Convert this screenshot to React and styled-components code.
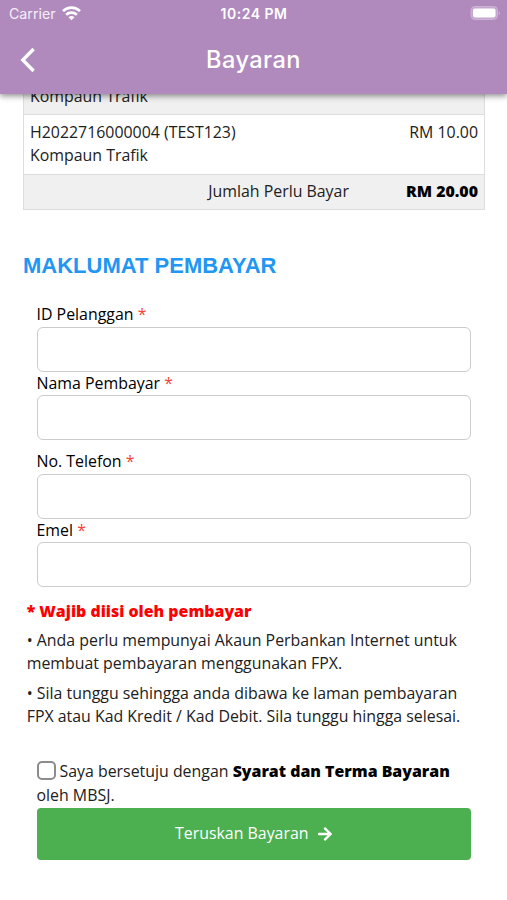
import React from 'react';
import styled, { createGlobalStyle, css } from 'styled-components';
import { FaArrowRight } from 'react-icons/fa';


const GlobalStyle = createGlobalStyle`
  * {
    box-sizing: border-box;
  }

  body {
    margin: 0;
    background-color: #FFFFFF;
    color: #212121;
    font-family: "Open Sans", "Noto Sans", sans-serif;
    font-size: 15.9px;
    line-height: 23.4px;
  }
`

const Screen = styled.div`
  height: 900px;
  display: flex;
  flex-direction: column;
  overflow: hidden;
`

const Header = styled.header`
  position: relative;
  z-index: 1;
  flex: none;
  height: 94px;
  background-color: #B08ABD;
  color: #FFFFFF;
  font-family: Inter, sans-serif;
  box-shadow: 0 2px 6px rgba(0, 0, 0, .45);
`

const StatusBar = styled.div`
  display: grid;
  grid-template-columns: 1fr auto 1fr;
  align-items: center;
  height: 27px;
  padding: 0 6px 0 9px;
  font-size: 14.2px;
  line-height: 27px;
`

const Carrier = styled.div`
  display: flex;
  align-items: center;
  gap: 6px;
  color: #F5EFF7;
`

const Clock = styled.div`
  margin-left: -2px;
  font-weight: 600;
  font-size: 14px;
  letter-spacing: .5px;
`

const Battery = styled.svg`
  justify-self: end;
`

const TitleBar = styled.div`
  display: grid;
  grid-template-columns: 1fr auto 1fr;
  align-items: center;
  height: 66px;
  padding: 0 20px;
`

const Title = styled.h1`
  margin: 0;
  font-size: 23.6px;
  font-weight: 500;
  line-height: 28px;
  letter-spacing: .4px;
`

const Content = styled.main`
  flex: 1;
  min-height: 0;
  overflow: hidden;
  padding: 0 22px 0 23px;
`

/* the list is scrolled, so its first item sits half under the header */
const Items = styled.div`
  margin-top: -41px;
  border: 1px solid #DDDDDD;
`

const Item = styled.div`
  display: flex;
  justify-content: space-between;
  height: 60px;
  padding: 6px 6px 6px;
  border-bottom: 1px solid #DDDDDD;

  ${({ shaded }) => shaded && css`
    align-items: flex-end;
    height: 61px;
    background-color: #F0F0F0;
  `}
`

const Total = styled.div`
  display: flex;
  justify-content: flex-end;
  align-items: center;
  gap: 57px;
  height: 34px;
  padding-right: 6px;
  background-color: #F0F0F0;
`

const Strong = styled.strong`
  font-weight: 800;
  color: #000000;
`

const SectionTitle = styled.h2`
  margin: 43px 0 24.3px;
  font-family: "Liberation Sans", Arial, sans-serif;
  font-size: 22px;
  font-weight: 700;
  line-height: 26px;
  color: #2196F3;
`

const Form = styled.form`
  padding: 0 14px 0 13.5px;
`

const Group = styled.div`
  margin-bottom: 10px;
`

const Field = styled.label`
  display: block;
  color: #000000;
`

const Required = styled.span`
  color: #F44336;
`

const Input = styled.input`
  display: block;
  width: 100%;
  height: 45px;
  padding: 0 10px;
  border: 1px solid #CCCCCC;
  border-radius: 6px;
  outline: none;
  background-color: #FFFFFF;
  font: inherit;
`

const Notes = styled.div`
  padding: 2.7px 14px 0 3.7px;
`

const Note = styled.p`
  margin: 0 0 6px;

  ${({ warning }) => warning && css`
    color: #FF0000;
    font-weight: 800;
  `}
`

const Agreement = styled.div`
  padding: 25.7px 14px 0 13.5px;
  line-height: 23.9px;
`

const Checkbox = styled.input`
  appearance: none;
  width: 19px;
  height: 19px;
  margin: 0 4px 0 0;
  border: 2px solid #8C8C8C;
  border-radius: 5px;
  vertical-align: -3px;
`

const Submit = styled.button`
  display: flex;
  align-items: center;
  justify-content: center;
  gap: 8px;
  width: 100%;
  height: 52px;
  padding: 0;
  border: none;
  border-radius: 4px;
  background-color: #4CAF50;
  color: #FFFFFF;
  font: inherit;
`

const groups = [
  ['ID Pelanggan', 'Nama Pembayar'],
  ['No. Telefon', 'Emel'],
]

const WifiIcon = () => (
  <svg width="19" height="15" viewBox="0 0 19 15" fill="none" stroke="#FFFFFF" strokeWidth="2.7">
    <path d="M1 5.1C5.8.4 13.2.4 18 5.1" />
    <path d="M4.1 8.7c3.1-2.8 7.7-2.8 10.8 0" />
    <path d="M9.5 14.2 6.5 11.2c1.8-1.5 4.2-1.5 6 0z" fill="#FFFFFF" stroke="none" />
  </svg>
)

const BatteryIcon = () => (
  <Battery width="31" height="15" viewBox="0 0 31 15">
    <rect x="1" y=".5" width="26.5" height="13" rx="4" fill="#C4A6CE" stroke="#CDB3D6" />
    <rect x="3" y="2.5" width="22.5" height="9" rx="2" fill="#FFFFFF" />
    <path d="M28.8 5.2c1.6.8 1.6 3 0 3.8z" fill="#CDB3D6" />
  </Battery>
)

const BackIcon = () => (
  <svg width="16" height="26" viewBox="0 0 16 26" fill="none" stroke="#FFFFFF" strokeWidth="3.4">
    <path d="M13.6 2 2.8 13l10.8 11" />
  </svg>
)

class App extends React.Component {
  handleSubmit = (e) => {
    e.preventDefault();
  }

  render() {
    return (
      <Screen>
        <GlobalStyle />

        <Header>
          <StatusBar>
            <Carrier>Carrier <WifiIcon /></Carrier>
            <Clock>10:24 PM</Clock>
            <BatteryIcon />
          </StatusBar>
          <TitleBar>
            <BackIcon />
            <Title>Bayaran</Title>
          </TitleBar>
        </Header>

        <Content>
          <Items>
            <Item shaded="true">
              <div>Kompaun Trafik</div>
            </Item>
            <Item>
              <div>H2022716000004 (TEST123)<br />Kompaun Trafik</div>
              <div>RM 10.00</div>
            </Item>
            <Total>
              <span>Jumlah Perlu Bayar</span>
              <Strong>RM 20.00</Strong>
            </Total>
          </Items>

          <SectionTitle>MAKLUMAT PEMBAYAR</SectionTitle>

          <Form id="bayaran" onSubmit={this.handleSubmit}>
            {groups.map((fields) =>
              <Group key={fields[0]}>
                {fields.map((label) =>
                  <Field key={label}>
                    {label} <Required>*</Required>
                    <Input type="text" />
                  </Field>
                )}
              </Group>
            )}
          </Form>

          <Notes>
            <Note warning="true">* Wajib diisi oleh pembayar</Note>
            <Note>• Anda perlu mempunyai Akaun Perbankan Internet untuk membuat pembayaran menggunakan FPX.</Note>
            <Note>• Sila tunggu sehingga anda dibawa ke laman pembayaran FPX atau Kad Kredit / Kad Debit. Sila tunggu hingga selesai.</Note>
          </Notes>

          <Agreement>
            <div>
              <Checkbox type="checkbox" />
              Saya bersetuju dengan <Strong>Syarat dan Terma Bayaran</Strong> oleh MBSJ.
            </div>
            <Submit type="submit" form="bayaran">Teruskan Bayaran <FaArrowRight size={16} /></Submit>
          </Agreement>
        </Content>
      </Screen>
    )
  }

};

export default App;
